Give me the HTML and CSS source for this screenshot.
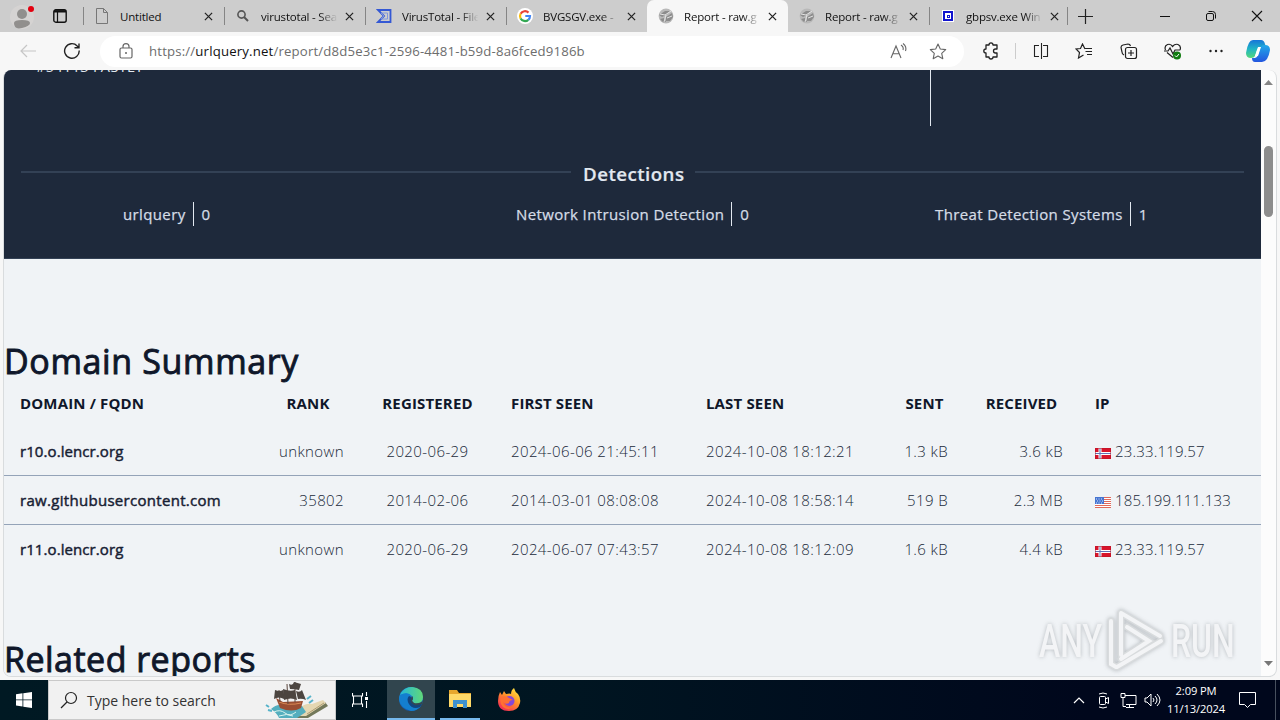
FILE: index.html
```
<!DOCTYPE html>
<html lang="en">
<head>
<meta charset="utf-8">
<title>Report - raw.githubusercontent.com</title>
<link rel="stylesheet" href="styles.css">
</head>
<body>
<svg class="defs" width="0" height="0">
  <defs>
    <symbol id="close" viewBox="0 0 10 10"><path d="M1 1l8 8M9 1l-8 8" fill="none" stroke="#222" stroke-width="1.4"/></symbol>
    <symbol id="globe" viewBox="0 0 16 16"><circle cx="8" cy="8" r="7.4" fill="#b9b9b9"/><path d="M1 7l6-4 5 0-4 4-4 2zM8 9l6-4 1 4-3 4-4 0zM2 11l4-1 2 4-3 0z" fill="#8c8c8c"/><path d="M2 6l5 1 6-4M8 7l-2 7M9 10l5-2" stroke="#e4e4e4" fill="none"/></symbol>
    <symbol id="norway" viewBox="0 0 16 11"><path fill="#d8142b" d="M0 0h16v11H0z"/><path d="M0 5.5h16M5 0v11" stroke="#fff" stroke-width="3"/><path d="M0 5.5h16M5 0v11" stroke="#6272b4" stroke-width="1"/><path d="M.5 .5h15v10H.5z" fill="none" stroke="#b51225" stroke-opacity=".5"/></symbol>
    <symbol id="usa" viewBox="0 0 16 11"><path fill="#fff" d="M0 0h16v11H0z"/><path d="M0 .5h16M0 2.5h16M0 4.5h16M0 6.5h16M0 8.5h16M0 10.5h16" stroke="#e0685a"/><path fill="#4775d1" d="M0 0h9v7H0z"/><path d="M1 2h7M2 4h7M1 6h7" stroke="#dce7ff" stroke-dasharray="1 1.5"/></symbol>
    <linearGradient id="edgeBlue" x1="0" y1="0" x2="0" y2="1"><stop stop-color="#1b9de2"/><stop offset="1" stop-color="#1257b0"/></linearGradient>
    <linearGradient id="edgeGreen"><stop stop-color="#25b8d8"/><stop offset="1" stop-color="#61d878"/></linearGradient>
    <linearGradient id="copilotA" x1="0" y1="0" x2="0" y2="1"><stop stop-color="#1675d9"/><stop offset=".5" stop-color="#20b5c5"/><stop offset="1" stop-color="#55d87a"/></linearGradient>
    <linearGradient id="copilotB" x1="0" y1="0" x2="0" y2="1"><stop stop-color="#20a9e8"/><stop offset="1" stop-color="#2456df"/></linearGradient>
    <linearGradient id="fox" x1=".9" y1="0" x2=".2" y2="1"><stop stop-color="#fff044"/><stop offset=".45" stop-color="#ff9528"/><stop offset="1" stop-color="#f32657"/></linearGradient>
  </defs>
</svg>

<header class="tabbar">
  <div class="profile"><svg width="26" height="28" viewBox="0 0 26 28"><circle cx="12" cy="14" r="12" fill="#d5d3d2"/><circle cx="12" cy="11" r="5" fill="#918f8d"/><path d="M4 20q0-3 8-3t8 3-8 5-8-5" fill="#918f8d"/><circle cx="21" cy="6" r="3" fill="#e3000f"/></svg></div>
  <div class="workspace"><svg width="14" height="14" viewBox="0 0 14 14"><rect x=".8" y=".8" width="12.4" height="12.4" rx="2" fill="none" stroke="#111" stroke-width="1.4"/><path d="M1 2.300h12" stroke="#111" stroke-width="2.400"/><path d="M4.500 3v10" stroke="#111" stroke-width="1.200"/></svg></div>
  <div class="tab line"><svg class="fav" viewBox="0 0 16 16"><path d="M2.5 .5h7l4 4v11h-11zM9.5 .5v4h4" fill="none" stroke="#777"/></svg><span>Untitled</span><svg class="x"><use href="#close"/></svg></div>
  <div class="tab line"><svg class="fav" viewBox="0 0 16 16"><circle cx="6.5" cy="6.5" r="3.6" fill="none" stroke="#555" stroke-width="1.6"/><path d="M9 9l4 4" stroke="#555" stroke-width="2"/></svg><span class="fade">virustotal - Sea</span><svg class="x"><use href="#close"/></svg></div>
  <div class="tab line"><svg class="fav" viewBox="0 0 16 16"><path d="M2 2h12.500v12H2l6-6z" fill="none" stroke="#3458d4" stroke-width="1.8"/><path d="M5 5h6.500v6H5l3-3z" fill="none" stroke="#7f96de" stroke-width="1"/></svg><span class="fade">VirusTotal - File</span><svg class="x"><use href="#close"/></svg></div>
  <div class="tab line google"><svg class="fav" viewBox="0 0 16 16"><circle cx="8" cy="8" r="8" fill="#fff"/><g fill="none" stroke-width="2.2"><path d="M11.5 4.6A5 5 0 0 0 3.6 5.8" stroke="#ea4335"/><path d="M3.6 5.8a5 5 0 0 0 0 4.6" stroke="#fbbc05"/><path d="M3.6 10.4a5 5 0 0 0 7.7 1.4" stroke="#34a853"/><path d="M11.3 11.8A5 5 0 0 0 13 8H8.3" stroke="#4285f4"/></g></svg><span class="fade">BVGSGV.exe -</span><svg class="x"><use href="#close"/></svg></div>
  <div class="tab active"><svg class="fav"><use href="#globe"/></svg><span class="fade">Report - raw.g</span><svg class="x"><use href="#close"/></svg></div>
  <div class="tab"><svg class="fav"><use href="#globe"/></svg><span class="fade">Report - raw.g</span><svg class="x"><use href="#close"/></svg></div>
  <div class="tab line"><svg class="fav" viewBox="0 0 16 16"><path fill="#fff" d="M2 2h12v12H2z"/><path d="M4 4h8v8H4z" fill="#fff" stroke="#1114ce" stroke-width="2"/><path d="M7 7h3v3H7z" fill="#1114ce"/><path d="M8 8h1v1H8z" fill="#fff"/></svg><span class="fade">gbpsv.exe Win</span><svg class="x"><use href="#close"/></svg></div>
  <div class="newtab line"><svg width="15" height="15" viewBox="0 0 15 15"><path d="M7.5 0v15M0 7.5h15" stroke="#222" stroke-width="1.2"/></svg></div>
  <div class="winbtns">
    <svg width="46" height="32" viewBox="0 0 46 32"><path d="M18 16.5h10" stroke="#111"/></svg>
    <svg width="46" height="32" viewBox="0 0 46 32"><rect x="18.5" y="13.5" width="7" height="7" rx="1.5" fill="none" stroke="#111"/><path d="M20.5 11.5h4q3 0 3 3v4" fill="none" stroke="#111"/></svg>
    <svg width="46" height="32" viewBox="0 0 46 32"><path d="M18 11l10 10M28 11l-10 10" stroke="#111" stroke-width="1.1"/></svg>
  </div>
</header>

<nav class="toolbar">
  <svg class="back" width="16" height="14" viewBox="0 0 16 14"><path d="M16 7H1M7 1L1 7l6 6" fill="none" stroke="#c6c6c6" stroke-width="1.2"/></svg>
  <svg class="reload" width="18" height="18" viewBox="0 0 18 18"><path d="M16.2 8.5a7.3 7.3 0 1 1-2-4.6L16 5.7M16 1.5v4.3h-4.5" fill="none" stroke="#222" stroke-width="1.4"/></svg>
  <div class="address">
    <svg width="14" height="16" viewBox="0 0 14 16"><rect x="1" y="5" width="12" height="10" rx="1.5" fill="none" stroke="#666" stroke-width="1.2"/><path d="M4 5V3.6a3 3 0 0 1 6 0V5" fill="none" stroke="#666" stroke-width="1.2"/><circle cx="7" cy="10" r="1" fill="#666"/></svg>
    <span class="url">https://<b>urlquery.net</b>/report/d8d5e3c1-2596-4481-b59d-8a6fced9186b</span>
    <svg class="read" width="18" height="16" viewBox="0 0 18 16"><path d="M1 15L6 3l5 12M3 10.8h6M11 2q3 2 2 5M13 .5q4 3 2.5 7.5" fill="none" stroke="#666" stroke-width="1.1"/></svg>
    <svg class="star" width="18" height="17" viewBox="0 0 18 17"><path d="M9 1l2.3 5 5.4.6-4 3.7 1.1 5.4L9 13l-4.8 2.7 1.1-5.4-4-3.7L6.700 6z" fill="none" stroke="#666" stroke-width="1.1" stroke-linejoin="round"/></svg>
  </div>
  <div class="tools">
    <svg width="16" height="18" viewBox="0 0 16 18"><path d="M3 3h3q0-2.200 2-2.200T10 3h4v4h-1.500q-2 0-2 2t2 2H14v4h-4q0 2-2 2t-2-2H3v-4Q.8 11 .8 9T3 7z" fill="none" stroke="#222" stroke-width="1.3" stroke-linejoin="round"/></svg>
    <i class="divider"></i>
    <svg width="16" height="16" viewBox="0 0 16 16"><path d="M6 2H2.500Q1 2 1 3.500v9Q1 14 2.500 14H6V2M10 2h3.500Q15 2 15 3.500v9q0 1.500-1.500 1.500H10V2M8 0v16" fill="none" stroke="none"/><path d="M6 2.500H1.500v11H6M10 2.500h4.500v11H10M8.500 0v16" fill="none" stroke="#222" stroke-width="1.100"/></svg>
    <svg width="18" height="16" viewBox="0 0 18 16"><path d="M10 6L7.500 1 5.500 5.500 1 6l3.500 3.500L3.500 15l5-3M10 5.500h7M10.500 8.500H17M12 11.500h5" fill="none" stroke="#222" stroke-width="1.2"/></svg>
    <svg width="18" height="17" viewBox="0 0 18 17"><path d="M4 12Q2 11 2 9L1 4.500Q1 2.500 3 2l5-1q2 0 2.500 2" fill="none" stroke="#222" stroke-width="1.200"/><rect x="5.500" y="4.500" width="11" height="11" rx="2" fill="none" stroke="#222" stroke-width="1.200"/><path d="M11 7v6M8 10h6" stroke="#222" stroke-width="1.200"/></svg>
    <svg width="18" height="17" viewBox="0 0 18 17"><path d="M1.500 7Q0 3 3.500 1.500 7 .5 8.500 3.500 11 .5 14 1.500 17.500 3 16 7M3 9.500l6 5M0 8h4l2-3 3 6 2-4h5" fill="none" stroke="#222" stroke-width="1.200"/><circle cx="13" cy="12.500" r="4" fill="#107c10"/><path d="M11 12.500l1.500 1.500 2.500-3" fill="none" stroke="#fff"/></svg>
    <svg width="14" height="4" viewBox="0 0 14 4"><g fill="#222"><circle cx="1.500" cy="2" r="1.200"/><circle cx="7" cy="2" r="1.200"/><circle cx="12.500" cy="2" r="1.200"/></g></svg>
    <svg class="copilot" width="24" height="24" viewBox="0 0 24 24"><path d="M7 1h8q3 0 4 4l1 3h-5q-3 0-4 3l-2 6q-1 2-4 2-5 0-5-5Q2 1 7 1z" fill="url(#copilotA)"/><path d="M19 6q5 0 5 5-2 12-8 12H9q-3 0-3-4h3q2 0 3-3l2-7q1-3 5-3z" fill="url(#copilotB)"/><path d="M12 8h3l-3 9H9z" fill="#fff"/></svg>
  </div>
</nav>

<div class="frame">
  <main class="page">
    <section class="hero">
      <span class="asn">#54113 FASTLY</span>
      <i class="rule"></i>
      <h3><span>Detections</span></h3>
      <div class="counts">
        <div class="count c1"><span>urlquery</span><b>0</b></div>
        <div class="count c2"><span>Network Intrusion Detection</span><b>0</b></div>
        <div class="count c3"><span>Threat Detection Systems</span><b>1</b></div>
      </div>
    </section>
    <h2 class="domain-title">Domain Summary</h2>
    <div class="table">
      <div class="row head"><span>DOMAIN / FQDN</span><span class="mid">RANK</span><span class="mid">REGISTERED</span><span>FIRST SEEN</span><span>LAST SEEN</span><span class="mid">SENT</span><span class="mid">RECEIVED</span><span>IP</span></div>
      <div class="row"><strong>r10.o.lencr.org</strong><span class="end">unknown</span><span class="mid">2020-06-29</span><span>2024-06-06 21:45:11</span><span>2024-10-08 18:12:21</span><span class="end">1.3 kB</span><span class="end">3.6 kB</span><span class="ip"><svg class="flag"><use href="#norway"/></svg>23.33.119.57</span></div>
      <div class="row"><strong class="long">raw.githubusercontent.com</strong><span class="end">35802</span><span class="mid">2014-02-06</span><span>2014-03-01 08:08:08</span><span>2024-10-08 18:58:14</span><span class="end">519 B</span><span class="end">2.3 MB</span><span class="ip"><svg class="flag"><use href="#usa"/></svg>185.199.111.133</span></div>
      <div class="row"><strong>r11.o.lencr.org</strong><span class="end">unknown</span><span class="mid">2020-06-29</span><span>2024-06-07 07:43:57</span><span>2024-10-08 18:12:09</span><span class="end">1.6 kB</span><span class="end">4.4 kB</span><span class="ip"><svg class="flag"><use href="#norway"/></svg>23.33.119.57</span></div>
    </div>
    <h2 class="related-title">Related reports</h2>
  </main>
  <aside class="scrollbar"><svg width="9" height="5" viewBox="0 0 9 5"><path d="M0 5l4.500-5L9 5z" fill="#858585"/></svg><i></i><svg width="9" height="5" viewBox="0 0 9 5"><path d="M0 0h9L4.500 5z" fill="#777"/></svg></aside>
</div>

<div class="watermark"><span>ANY</span><svg width="58" height="64" viewBox="0 0 58 64"><path d="M4 12v43l5 3M14 5v41M14 4l39 23M20 18l22 14-28 18M10 58l44-26" fill="none" stroke="#d3d6d8" stroke-width="7" stroke-linecap="round"/><path d="M4 12v43l5 3M14 5v41M14 4l39 23M20 18l22 14-28 18M10 58l44-26" fill="none" stroke="#f4f5f6" stroke-width="4" stroke-linecap="round"/></svg><span>RUN</span></div>

<footer class="taskbar">
  <div class="start"><svg width="16" height="16" viewBox="0 0 16 16"><path d="M0 2.200l6.500-.9v6.200H0zM7.300 1.200L16 0v7.500H7.300zM0 8.300h6.500v6.200L0 13.600zM7.300 8.300H16V16l-8.700-1.200z" fill="#fff"/></svg></div>
  <div class="search">
    <svg width="18" height="18" viewBox="0 0 18 18"><circle cx="11" cy="7" r="5.500" fill="none" stroke="#222" stroke-width="1.200"/><path d="M7 11l-6 6" stroke="#222" stroke-width="1.300"/></svg>
    <span>Type here to search</span>
    <svg class="ship" width="66" height="38" viewBox="0 0 66 38"><path d="M34 30l26-9 3 4-20 12H22z" fill="#73785a"/><path d="M31 31q8-10 16-8l11-4 3 3-20 13H27z" fill="#e5d7b2"/><path d="M42 33l17-11" stroke="#ac9c72"/><path d="M6 28q9-8 15 0 6-8 16-3l4 6-9 6H14q-2-5-8-9z" fill="#54aebe"/><path d="M11 17l7 4 20-1-2 7q-9 5-21 0z" fill="#9a4e32"/><path d="M14 21q10 4 22 1" stroke="#d98a55" fill="none"/><path d="M22 3l1 20M30 1v20M14 9l1 12" stroke="#59443b"/><path d="M10 9q5 2 8 0l1 9q-5-3-10 0zM18 8q7 3 12 1l2 10q-6-3-13 0zM24 3q4 2 5-2l7 2-2 6q-4-1-9-1zM31 10q4 2 6-1l4 10q-4-2-8-1z" fill="#4c4540"/><path d="M1 24l3 2M3 29l4 1M42 18l4-3M44 22l4-3" stroke="#56b3ca" stroke-width="2"/><path d="M9 31q6-3 11 1t11-1M14 35q8-3 14 0" stroke="#d8f3ed" fill="none"/></svg>
  </div>
  <div class="app view"><svg width="17" height="16" viewBox="0 0 17 16"><path d="M.5 1V4h10V1M.5 15v-3h10v3M1.500 4v8M9.500 4v8M14.500 0v4M14.500 9v7" fill="none" stroke="#fff" stroke-width="1.100"/><path d="M13 5h3v3h-3z" fill="#fff"/></svg></div>
  <div class="app edge"><svg width="24" height="24" viewBox="0 0 24 24"><circle cx="12" cy="12" r="12" fill="url(#edgeBlue)"/><path d="M1 8Q5 0 13 0q11 1 11 10 0 7-8 7l-3-3q2-3 0-5Q9 4 1 8z" fill="url(#edgeGreen)"/><path d="M1 8q8-4 11 1-5 3-2 8 4 6 12 2-4 5-10 5Q1 21 0 12z" fill="#147fcf"/><path d="M10 9q4 1 3 5 0 2 3 3 4 1 7-2 0 3-2 5-7 3-11-3-3-5 0-8z" fill="#12457f"/><path d="M13 9q2 2 0 5l2 2q7 1 9-3l-1 4q-8 3-11-2-1-2 1-6z" fill="#36474f"/></svg></div>
  <div class="app files"><svg width="22" height="20" viewBox="0 0 22 20"><path d="M0 1h8l2 3h12v14H0z" fill="#e7a72d"/><path d="M0 5h22v13H0z" fill="#ffd968"/><path d="M4 19v-8h14v8h-4v-4H8v4z" fill="#3d91cf"/></svg></div>
  <div class="app firefox"><svg width="24" height="24" viewBox="0 0 24 24"><path d="M3 4l2 3 2-4 2 3q4-1 5 0 0-4 3-6 1 4 4 6 3 4 2 9-2 8-11 8Q1 23 1 13 1 8 3 4z" fill="url(#fox)"/><circle cx="12.500" cy="13" r="5" fill="#8448d8"/><path d="M4 9q5-2 8 1l4 2q-4 0-4 3-3 2-6-1 2 7 10 5-5 4-10 0-4-4-2-10z" fill="#ff7032"/></svg></div>
  <div class="tray">
    <svg width="12" height="8" viewBox="0 0 12 8"><path d="M1 7l5-5 5 5" fill="none" stroke="#fff" stroke-width="1.200"/></svg>
    <svg width="14" height="17" viewBox="0 0 14 17"><rect x="2.500" y="4.500" width="6" height="8" rx="1" fill="none" stroke="#fff"/><path d="M8.500 7l3-1.500v6l-3-1.500M2 2q4-2 8 0M2 15q4 2 8 0" fill="none" stroke="#fff"/></svg>
    <svg width="17" height="15" viewBox="0 0 17 15"><path d="M5 2.500h11v9H6M1 .5h4v4H1zM3 4.500v9h3M9.500 11.500V14M6 14.500h8" fill="none" stroke="#fff"/></svg>
    <svg width="17" height="14" viewBox="0 0 17 14"><path d="M1 5h2l4-4v12L3 9H1zM9 5q2 2 0 4M11 3q4 4 0 8M13 1q6 6 0 12" fill="none" stroke="#fff"/></svg>
    <div class="clock"><span>2:09 PM</span><span>11/13/2024</span></div>
    <svg class="notice" width="17" height="16" viewBox="0 0 17 16"><path d="M.5.5h16v12h-5L8.500 15.500l-3-3h-5z" fill="none" stroke="#fff"/></svg>
  </div>
</footer>
</body>
</html>
```
FILE: styles.css
```
* { box-sizing: border-box; }
body { margin: 0; width: 1280px; height: 720px; overflow: hidden; background: #f7f7f7; font-family: "Open Sans", "Noto Sans", sans-serif; font-size: 15px; display: flex; flex-direction: column; position: relative; }
svg { flex: none; display: block; }
.defs { position: absolute; }

.tabbar { height: 32px; display: flex; background: #cdcdcd; flex: none; align-items: center; }
.profile { width: 53px; padding: 2px 0 0 10px; flex: none; }
.workspace { width: 30px; flex: none; }
.tab { width: 141px; flex: none; height: 32px; display: flex; align-items: center; padding-left: 11px; position: relative; font-size: 11.5px; letter-spacing: -.12px; }
.line::before { content: ""; position: absolute; left: 0; top: 7px; height: 18px; width: 1px; background: #858585; }
.fav { width: 16px; height: 16px; }
.tab span { width: 78px; margin-left: 10px; white-space: nowrap; color: #111; letter-spacing: -.2px; }
.fade { -webkit-mask-image: linear-gradient(90deg, #000 75%, transparent 98%); mask-image: linear-gradient(90deg, #000 75%, transparent 98%); }
.x { width: 9px; height: 9px; margin-left: 6px; }
.tab.active { background: #f7f7f7; border-radius: 7px 7px 0 0; }
.newtab { position: relative; width: 72px; flex: none; padding-left: 8px; height: 32px; display: flex; align-items: center; }
.newtab::before { left: -3px; }
.winbtns { display: flex; }
.winbtns svg { width: 46px; }

.toolbar { height: 38px; flex: none; display: flex; align-items: center; background: #f7f7f7; }
.back { margin-left: 20px; }
.reload { margin-left: 27px; }
.address { display: flex; align-items: center; width: 864px; height: 31px; border-radius: 16px; background: #fff; margin-left: 19px; padding-left: 19px; flex: none; }
.url { font-size: 13.2px; letter-spacing: .17px; margin-left: 16px; width: 740px; color: #6d6d6d; white-space: nowrap; }
.url b { color: #111; font-weight: 400; }
.read { margin-left: 1px; }
.star { margin-left: 21px; }
.tools { flex: 1; display: flex; align-items: center; justify-content: space-between; padding: 0 10px 0 19px; }
.divider { width: 1px; height: 16px; background: #ccc; margin: 0 -10px; }
.copilot { margin-left: -3px; }

.frame { height: 607px; width: 1274px; margin-left: 3px; border: 1px solid #d9dcde; border-top: 0; border-radius: 8px; display: flex; background: #fcfcfc; flex: none; overflow: hidden; }
.page { width: 1257px; background: #f0f3f6; height: 607px; overflow: hidden; flex: none; }
.hero { height: 189px; background: #1e293b; border-bottom: 1px solid #334155; position: relative; padding-top: 89px; color: #e2e8f0; }
.asn { position: absolute; left: 32px; top: -13px; font-size: 14.5px; line-height: 20px; letter-spacing: .35px; }
.rule { position: absolute; left: 926px; top: 0; width: 1px; height: 56px; background: #e2e8f0; }
.hero h3 { margin: 0 17px; display: flex; align-items: center; height: 28px; font-size: 18.7px; font-weight: 600; letter-spacing: .46px; -webkit-text-stroke: .2px; }
.hero h3 span { margin: 0 11px 0 12px; }
.hero h3::before, .hero h3::after { content: ""; height: 2px; background: #334155; margin-top: -2px; }
.hero h3::before { width: 550px; }
.hero h3::after { flex: 1; }
.counts { display: flex; margin-top: 15px; }
.count { display: flex; line-height: 24px; height: 24px; white-space: nowrap; letter-spacing: .37px; -webkit-text-stroke: .25px; color: #d5dce6; }
.count b { font-weight: 400; border-left: 1px solid #e2e8f0; padding-left: 8px; margin-left: 7px; }
.c1 { margin-left: 119px; width: 393px; }
.c2 { width: 419px; }

h2 { margin: 0; font-size: 34px; line-height: 40px; font-weight: 400; letter-spacing: .64px; -webkit-text-stroke: .9px; color: #0f172a; white-space: nowrap; }
.domain-title { margin-top: 82px; }
.related-title { margin-top: 65px; letter-spacing: .48px; }
.row { display: grid; grid-template-columns: 252px 104px 135px 195px 195px 79px 115px 182px; height: 49px; align-items: center; color: #202a3a; font-weight: 300; letter-spacing: .39px; border-bottom: 1px solid #94a3b8; white-space: nowrap; }
.row > * { padding-left: 16px; }
.row .mid { padding-left: 0; text-align: center; }
.row .end { text-align: right; padding: 0 16px 0 0; }
.row .ip { letter-spacing: .17px; }
.row strong { font-weight: 400; letter-spacing: .08px; -webkit-text-stroke: .45px; color: #172033; }
.row strong.long { letter-spacing: .3px; }
.row.head { height: 48px; font-weight: 700; letter-spacing: .15px; border: 0; color: #0f172a; margin-top: -2px; }
.row:last-child { border-bottom-color: transparent; }
.flag { width: 16px; height: 11px; display: inline-block; margin-right: 4px; vertical-align: -2px; }

.scrollbar { width: 15px; display: flex; flex-direction: column; align-items: center; padding: 10px 0 10px; }
.scrollbar i { width: 9px; height: 71px; background: #8d8d8d; border-radius: 5px; margin: 61px 0 auto; }

.watermark { position: absolute; left: 1039px; top: 609px; display: flex; align-items: center; color: #f4f5f6; filter: drop-shadow(0 0 2px #a6abb0); opacity: .8; }
.watermark span { font-family: "Roboto", sans-serif; font-size: 47px; font-weight: 500; line-height: 64px; width: 66px; transform: scaleX(.68); transform-origin: left; }
.watermark svg { margin: 0 6px 0 2px; }

.taskbar { height: 40px; margin-top: 3px; display: flex; flex: none; background: linear-gradient(90deg, #001923, #001521 45%, #00071c 85%); color: #fff; }
.start { width: 48px; display: flex; align-items: center; justify-content: center; }
.search { width: 288px; background: #f1f1f1; border: 1px solid #c9c9c9; display: flex; align-items: center; padding-left: 11px; color: #333; }
.search span { margin-left: 9px; font-size: 14px; width: 178px; white-space: nowrap; }
.app { width: 49px; display: flex; align-items: center; justify-content: center; }
.view { width: 51px; padding-right: 3px; }
.edge { width: 48px; background: #31454e; border-bottom: 2px solid #76b9ed; }
.files { width: 40px; margin: 0 5px; border-bottom: 2px solid #76b9ed; }
.firefox { width: 47px; }
.tray { margin-left: auto; display: flex; align-items: center; gap: 9px; border-right: 1px solid #47505e; margin-right: 4px; }
.tray > svg:first-child { margin-right: 3px; }
.tray > svg:nth-child(4) { margin-left: -2px; }
.clock { display: flex; flex-direction: column; align-items: center; width: 62px; margin-left: -5px; font-size: 11.2px; line-height: 18px; letter-spacing: -.15px; }
.notice { margin: 0 19px 0 3px; }
```
